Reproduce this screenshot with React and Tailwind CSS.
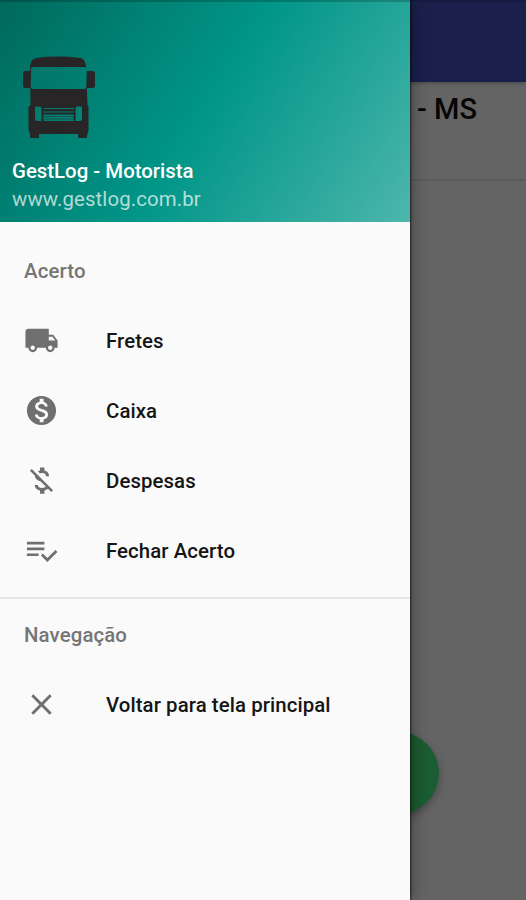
import React from 'react';
import { MdLocalShipping, MdMonetizationOn, MdMoneyOff, MdClear } from 'react-icons/md';

const PlaylistCheck = ({ size }) => (
  <svg width={size} height={size} viewBox="0 0 24 24" fill="currentColor">
    <path d="M14 10H2v1.800h12v-1.800zm0-4H2v1.800h12V6zM2 15.800h8v-1.800H2v1.800zm19.600-4.100L22.900 13l-6.890 6.800-4.410-4.400L12.900 14.100l3.110 3.100 5.590-5.500z" />
  </svg>
);

const TruckLogo = () => (
  <svg width="72" height="83" viewBox="0 0 72 83" className="text-[#272526]" fill="currentColor">
    <path
      fillRule="evenodd"
      d="M7 10 Q8 3 13 2 Q35 -.8 58 2 Q62 3 63 10 L64.500 49 L65.500 51 V74 L64 80 V81 Q64 82 63 82 H56 Q55 82 55 81 V78 H16 V81 Q16 82 15 82 H8 Q7 82 7 81 V77 L5.500 74 V51 L7.500 49 Z M9 11 Q8 11 8 13 V31 Q8 33 10 33 H61 Q63 33 63 31 V13 Q63 11 61.500 11 Z M12 51 V63 Q12 65 14 65 H18.500 V53 Q18.500 50.500 17 50.500 H13 Z M54 50.500 Q52.500 50.500 52.500 53 V65 H57 Q59 65 59 63 V51 L58 50.500 Z M20.500 52 V53 H51 V52 Z M20.500 55.500 V56.500 H51 V55.500 Z M20.500 58.500 V65 H50.500 V58.500 Z"
    />
    <path d="M21 60h29v1H21zM21 62.500h29v1H21z" opacity=".45" />
    <path d="M2 15h5v17H2q-2 0-2-2V17q0-2 2-2zM64 15h5q3 0 3 2v13q0 2-3 2h-5z" />
  </svg>
);

const settlementItems = [
  { label: 'Fretes', icon: MdLocalShipping },
  { label: 'Caixa', icon: MdMonetizationOn },
  { label: 'Despesas', icon: MdMoneyOff },
  { label: 'Fechar Acerto', icon: PlaylistCheck },
];

const navigationItems = [{ label: 'Voltar para tela principal', icon: MdClear }];

const DrawerItem = ({ label, icon: Icon }) => (
  <button className="flex h-[70px] w-full items-center pl-6 text-left">
    <span className="w-[82px] shrink-0 text-[#6f6f6f]">
      <Icon size={35} />
    </span>
    <span className="pt-0.5 text-[20.4px] font-medium tracking-[0.08px] text-[#151515]">{label}</span>
  </button>
);

const DrawerSection = ({ title, items, className }) => (
  <section className={className}>
    <h2 className="flex h-[70px] items-center pl-6 pt-0.5 text-[20.4px] font-medium tracking-[0.12px] text-[#757575]">{title}</h2>
    {items.map(item => <DrawerItem key={item.label} {...item} />)}
  </section>
);

const Drawer = () => (
  <aside className="absolute inset-y-0 left-0 w-[410px] bg-[#fafafa] shadow-[1px_0_2px_rgba(0,0,0,0.6),3px_0_14px_rgba(0,0,0,0.3)]">
    <header className="flex h-[222px] flex-col border-t-2 border-black/20 bg-[linear-gradient(123deg,#00695c_0%,#009688_50%,#4db6ac_100%)] bg-origin-border pl-3 pt-[54px]">
      <div className="ml-[11px] h-[83px]">
        <TruckLogo />
      </div>
      <p className="mt-[18px] text-[20.4px] font-medium leading-7 text-white">GestLog - Motorista</p>
      <p className="text-[20.4px] leading-7 tracking-[0.1px] text-white/70">www.gestlog.com.br</p>
    </header>
    <DrawerSection title="Acerto" items={settlementItems} className="h-[377px] border-b-2 border-[#e4e4e4] pt-[13px]" />
    <DrawerSection title="Navegação" items={navigationItems} />
  </aside>
);

export default function App() {
  return (
    <div className="relative h-[900px] w-[526px] overflow-hidden bg-[#646464] font-[Roboto,sans-serif]">
      <div className="relative h-[82px] border-t-2 border-[#151b40] bg-[#1a204b] shadow-[0_1px_4px_rgba(0,0,0,0.3)]" />
      <div className="flex h-[99px] justify-end border-b-2 border-[#5b5b5b] pr-[49px] pt-[9px]">
        <p className="text-[29px] font-medium leading-9 text-[#050505]">- MS</p>
      </div>
      <div className="absolute left-[357px] top-[732px] size-[82px] rounded-full bg-[#1b5c32] shadow-[0_4px_9px_rgba(0,0,0,0.3)]" />
      <Drawer />
    </div>
  );
}
